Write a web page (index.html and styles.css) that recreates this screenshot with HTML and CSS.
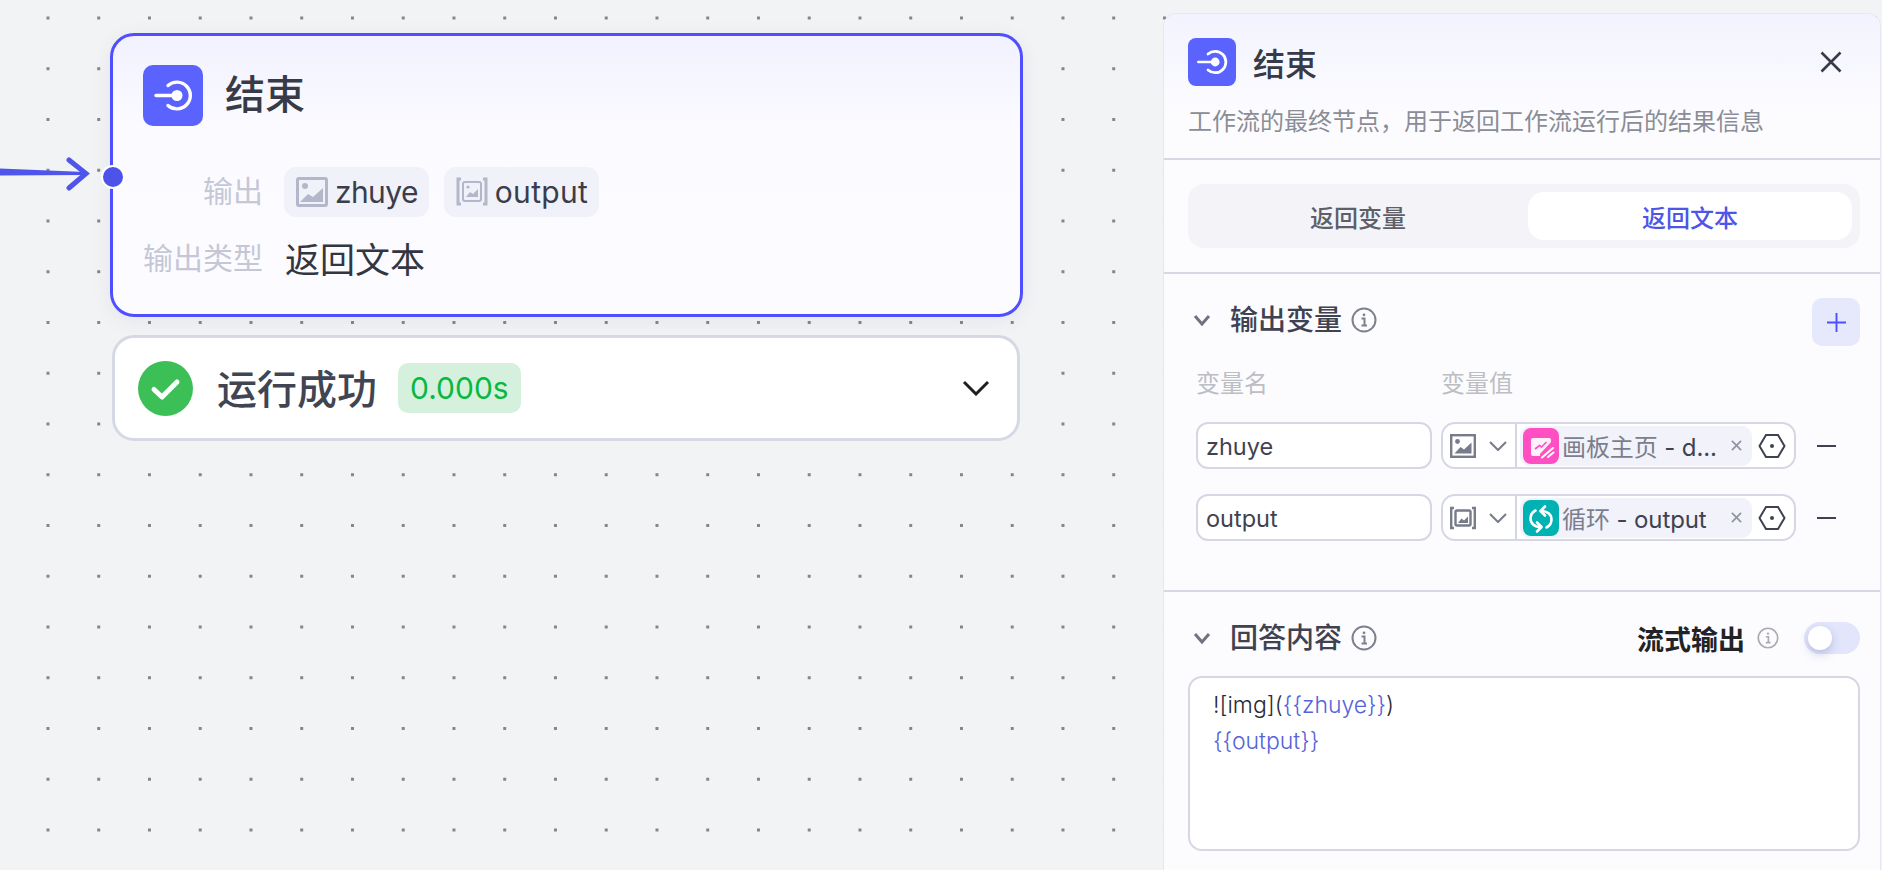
FILE: index.html
```html
<!DOCTYPE html>
<html lang="zh-CN">
<head>
<meta charset="utf-8">
<title>结束节点</title>
<link rel="stylesheet" href="styles.css">
</head>
<body>
<div class="app">
  <main class="canvas">
    <svg class="edge" width="100" height="50" viewBox="0 0 100 50">
      <path class="edge-fill" d="M0 11.5 L85 15 L85 18 L0 18.5 Z"/>
      <path class="edge-head" d="M69 3 L86 16.5 L69 31"/>
    </svg>
    <section class="node">
      <span class="handle"></span>
      <header class="node-head">
        <span class="end-icon end-icon-lg"><svg viewBox="0 0 60 60"><path d="M13 30H32"/><circle cx="34" cy="30" r="5.5"/><path d="M25 20A13.4 13.4 0 1 1 25 40"/></svg></span>
        <h1 class="node-title">结束</h1>
      </header>
      <div class="node-row node-row-out">
        <span class="node-label">输出</span>
        <span class="chip chip-image">
          <svg class="chip-icon" viewBox="0 0 32 30"><rect x="1.5" y="1.5" width="29" height="27" rx="1.5" class="ico-line"/><circle cx="9" cy="9" r="3" class="ico-fill"/><path d="M4 25 L12 17 L17 20 L27 11 V25 Z" class="ico-fill"/></svg>
          zhuye
        </span>
        <span class="chip chip-array">
          <svg class="chip-icon" viewBox="0 0 32 30"><path d="M5 2H2V27H5M27 2H30V27H27" class="ico-line"/><rect x="7" y="5" width="18" height="19" rx="2" class="ico-line ico-thin"/><circle cx="12" cy="10" r="1.6" class="ico-fill"/><path d="M10 20L14 15 17 17 22 12V20Z" class="ico-fill"/></svg>
          output
        </span>
      </div>
      <div class="node-row">
        <span class="node-label">输出类型</span>
        <span class="node-value">返回文本</span>
      </div>
    </section>
    <section class="result">
      <svg class="result-check" viewBox="0 0 55 55"><circle cx="27.5" cy="27.5" r="27.5"/><path d="M16 28.5 L24 36 L39 21"/></svg>
      <span class="result-text">运行成功</span>
      <span class="result-time">0.000s</span>
      <svg class="result-chevron" viewBox="0 0 28 16"><path d="M2 2 L14 14 L26 2"/></svg>
    </section>
  </main>

  <aside class="panel">
    <header class="panel-head">
      <div class="panel-title-row">
        <span class="end-icon"><svg viewBox="0 0 60 60"><path d="M13 30H32"/><circle cx="34" cy="30" r="5.5"/><path d="M25 20A13.4 13.4 0 1 1 25 40"/></svg></span>
        <h2 class="panel-title">结束</h2>
        <svg class="panel-close" viewBox="0 0 22 22"><path d="M1.5 1.5 L20.5 20.5 M20.5 1.5 L1.5 20.5"/></svg>
      </div>
      <p class="panel-desc">工作流的最终节点，用于返回工作流运行后的结果信息</p>
    </header>

    <div class="tabs-wrap">
      <div class="tabs">
        <span class="tab">返回变量</span>
        <span class="tab tab-active">返回文本</span>
      </div>
    </div>

    <section class="sec sec-vars">
      <div class="sec-head">
        <svg class="sec-chevron" viewBox="0 0 18 12"><path d="M2 2 L9 10 L16 2"/></svg>
        <span class="sec-title">输出变量</span>
        <svg class="info" viewBox="0 0 26 26"><circle cx="13" cy="13" r="11.5"/><path d="M10.5 11.5H13.5V18.5M10.5 18.5H16"/><circle class="info-dot" cx="13" cy="7.8" r="1.4"/></svg>
        <span class="add-btn"><svg viewBox="0 0 20 20"><path d="M10 0V20M0 10H20"/></svg></span>
      </div>
      <div class="var-grid var-labels">
        <span>变量名</span>
        <span>变量值</span>
      </div>
      <div class="var-grid var-row">
        <span class="var-name">zhuye</span>
        <div class="var-value">
          <span class="var-type">
            <svg class="type-icon" viewBox="0 0 26 24"><rect x="1.2" y="1.2" width="23.6" height="21.6" class="type-line"/><circle cx="7.5" cy="7.5" r="2.4" class="type-fill"/><path d="M4.5 19.5 L10.5 13 L14 15.5 L21.5 8.5 V19.5 Z" class="type-fill"/></svg>
            <svg class="type-chevron" viewBox="0 0 18 10"><path d="M1 1 L9 9 L17 1"/></svg>
          </span>
          <span class="ref">
            <span class="ref-icon ref-pink"><svg viewBox="0 0 36 36"><path class="pink-sheet" d="M8 12a2 2 0 0 1 2-2H26a2 2 0 0 1 2 2V14L17 26V28H10a2 2 0 0 1-2-2Z"/><path class="pink-line" d="M12 21L16.5 17.5 18.5 19 23.5 14"/><path class="pink-stroke" d="M19 29.5L30 20M25 29L30.5 24.5"/></svg></span>
            <span class="ref-text"><span class="ref-node">画板主页</span> - d...</span>
            <svg class="ref-x" viewBox="0 0 12 12"><path d="M1 1L11 11M11 1L1 11"/></svg>
          </span>
          <svg class="hex" viewBox="0 0 28 26"><path d="M8 2H20L26.5 13 20 24H8L1.5 13Z"/><circle cx="14" cy="13" r="2"/></svg>
        </div>
        <span class="minus"></span>
      </div>
      <div class="var-grid var-row">
        <span class="var-name">output</span>
        <div class="var-value">
          <span class="var-type">
            <svg class="type-icon" viewBox="0 0 26 24"><path d="M4 2H1.2V22H4M22 2H24.8V22H22" class="type-line"/><rect x="5.5" y="4.5" width="15" height="15" rx="1.5" class="type-line"/><path d="M8 17L11.5 12.5 14 14.5 18 10.5V17Z" class="type-fill"/></svg>
            <svg class="type-chevron" viewBox="0 0 18 10"><path d="M1 1 L9 9 L17 1"/></svg>
          </span>
          <span class="ref">
            <span class="ref-icon ref-teal"><svg viewBox="0 0 36 36"><path d="M18 11C25 11 28.5 15 28.5 19.5C28.5 23 26.5 26 23.5 27.5"/><path d="M22 6.5L17.5 11 22 15.5"/><path d="M18 27C11 27 7.5 23 7.5 18.5C7.5 15 9.5 12 12.5 10.5"/><path d="M14 22.5L18.5 27 14 31.5"/></svg></span>
            <span class="ref-text"><span class="ref-node">循环</span> - output</span>
            <svg class="ref-x" viewBox="0 0 12 12"><path d="M1 1L11 11M11 1L1 11"/></svg>
          </span>
          <svg class="hex" viewBox="0 0 28 26"><path d="M8 2H20L26.5 13 20 24H8L1.5 13Z"/><circle cx="14" cy="13" r="2"/></svg>
        </div>
        <span class="minus"></span>
      </div>
    </section>

    <section class="sec sec-answer">
      <div class="sec-head sec-head-answer">
        <svg class="sec-chevron" viewBox="0 0 18 12"><path d="M2 2 L9 10 L16 2"/></svg>
        <span class="sec-title">回答内容</span>
        <svg class="info" viewBox="0 0 26 26"><circle cx="13" cy="13" r="11.5"/><path d="M10.5 11.5H13.5V18.5M10.5 18.5H16"/><circle class="info-dot" cx="13" cy="7.8" r="1.4"/></svg>
        <span class="stream-label">流式输出</span>
        <svg class="info info-light" viewBox="0 0 26 26"><circle cx="13" cy="13" r="11.5"/><path d="M10.5 11.5H13.5V18.5M10.5 18.5H16"/><circle class="info-dot" cx="13" cy="7.8" r="1.4"/></svg>
        <span class="toggle"><span class="toggle-knob"></span></span>
      </div>
      <div class="editor">
        <div>![img](<span class="tpl">{{zhuye}}</span>)</div>
        <div class="tpl">{{output}}</div>
      </div>
    </section>
  </aside>
</div>
</body>
</html>
```

FILE: styles.css
```css
* { box-sizing: border-box; }
html, body { margin: 0; height: 100%; overflow: hidden; }
body {
  font-family: Inter, "Noto Sans CJK SC", sans-serif;
  color: #383b47;
}
h1, h2, p { margin: 0; font-weight: 400; }
svg { display: block; flex: none; fill: none; }

.app {
  display: flex;
  height: 870px;
  background-color: #f2f3f5;
  background-image: radial-gradient(circle, #858589 1.4px, transparent 1.9px);
  background-size: 50.76px 50.76px;
  background-position: 22.6px -7.4px;
}
.canvas { position: relative; flex: 1; min-width: 0; }

/* canvas items */
.edge { position: absolute; left: 0; top: 157px; }
.edge-fill { fill: #4f55ea; }
.edge-head { stroke: #4f55ea; stroke-width: 5; stroke-linecap: round; stroke-linejoin: miter; }

.node {
  position: absolute;
  left: 110px;
  top: 33px;
  width: 913px;
  height: 284px;
  padding: 28.5px 30px;
  border: 3px solid #4f4fff;
  border-radius: 24px;
  background: linear-gradient(180deg, #f2f2ff 0%, #fbfbff 36%, #fcfcff 100%);
  box-shadow: 0 4px 22px rgba(30, 35, 60, .06);
}
.handle {
  position: absolute;
  left: -12px;
  top: 129px;
  width: 24px;
  height: 24px;
  border-radius: 50%;
  background: #4d53e8;
  border: 2px solid #fff;
}
.node-head { display: flex; align-items: center; gap: 22px; }
.end-icon {
  display: block;
  flex: none;
  width: 48px;
  height: 48px;
  border-radius: 8px;
  background: #5b63ff;
}
.end-icon svg { width: 100%; height: 100%; }
.end-icon path { stroke: #fff; stroke-width: 3.4; stroke-linecap: round; }
.end-icon circle { fill: #fff; }
.end-icon-lg { width: 60px; height: 61px; border-radius: 10px; }
.node-title { font-size: 40px; line-height: 60px; font-weight: 500; color: #383b47; }
.node-row { display: flex; align-items: center; gap: 21px; margin-top: 15px; height: 50px; }
.node-row-out { margin-top: 41px; gap: 21px; }
.node-label {
  width: 120px;
  flex: none;
  margin-bottom: 2px;
  text-align: right;
  white-space: nowrap;
  font-size: 30px;
  color: #c5c7d6;
}
.node-row-out .node-label { margin-bottom: 6px; }
.chip {
  display: flex;
  align-items: center;
  gap: 7px;
  height: 50px;
  padding: 0 11px 0 12px;
  border-radius: 12px;
  background: #f0f1f9;
  font-size: 30px;
  color: #3a3d4c;
}
.chip-image { letter-spacing: -.6px; }
.chip-array { letter-spacing: .3px; margin-left: -6px; }
.chip-icon { width: 32px; height: 30px; }
.ico-line { stroke: #b4b7c9; stroke-width: 3; }
.ico-thin { stroke-width: 2; }
.ico-fill { fill: #b4b7c9; }
.node-value { font-size: 35px; color: #333640; margin: 2px 0 0 1px; }

.result {
  position: absolute;
  left: 112px;
  top: 335px;
  width: 908px;
  height: 106px;
  display: flex;
  align-items: center;
  padding: 0 23px;
  border: 3px solid #d6d8e5;
  border-radius: 22px;
  background: #fff;
}
.result-check { width: 55px; height: 55px; }
.result-check circle { fill: #3dbf57; }
.result-check path { stroke: #fff; stroke-width: 5; stroke-linecap: round; stroke-linejoin: round; }
.result-text { margin: 0 0 2px 24px; font-size: 40px; font-weight: 500; color: #414452; }
.result-time {
  display: flex;
  align-items: center;
  height: 50px;
  margin-left: 21px;
  padding: 0 12px;
  border-radius: 10px;
  background: #d5f1de;
  font-size: 30px;
  color: #09b83e;
}
.result-chevron { width: 28px; height: 16px; margin-left: auto; margin-right: 4px; }
.result-chevron path { stroke: #1f2024; stroke-width: 3; }

/* panel */
.panel {
  flex: none;
  width: 718px;
  margin: 13px 1px 0 0;
  border: 1px solid #e6e7f0;
  border-bottom: 0;
  border-radius: 14px 14px 0 0;
  background: #fcfcff;
  overflow: hidden;
}
.panel-head {
  height: 146px;
  padding: 24px 38px 0 24px;
  border-bottom: 2px solid #d5d7e5;
  background: linear-gradient(180deg, #f2f3fe 0%, #fcfcff 70%);
}
.panel-title-row { display: flex; align-items: center; gap: 17px; }
.panel-title { font-size: 32px; font-weight: 500; color: #383b47; }
.panel-close { width: 22px; height: 22px; margin-left: auto; }
.panel-close path { stroke: #383b47; stroke-width: 2.6; }
.panel-desc { margin-top: 18px; font-size: 24px; line-height: 36px; color: #8a8d97; }

.tabs-wrap { padding: 24px 20px 24px 24px; border-bottom: 2px solid #d5d7e5; }
.tabs {
  display: flex;
  gap: 8px;
  height: 64px;
  padding: 8px;
  border-radius: 16px;
  background: #f4f4f8;
}
.tab {
  flex: 1;
  display: flex;
  align-items: center;
  justify-content: center;
  border-radius: 16px;
  font-size: 24px;
  font-weight: 500;
  color: #5d5f69;
}
.tab-active { background: #fff; color: #4e55e8; }

.sec { padding: 24px 20px 0 24px; }
.sec-vars { height: 318px; border-bottom: 2px solid #d5d7e5; }
.sec-answer { padding-top: 30px; }
.sec-head { display: flex; align-items: flex-start; height: 48px; }
.sec-head-answer { align-items: center; height: 32px; }
.sec-chevron { width: 18px; height: 12px; margin: 16px 0 0 5px; }
.sec-head-answer .sec-chevron { margin-top: 0; }
.sec-chevron path { stroke: #6f7280; stroke-width: 3; }
.sec-title {
  margin-left: 19px;
  font-size: 28px;
  line-height: 44px;
  font-weight: 500;
  color: #3f4250;
}
.sec-head-answer .sec-title { line-height: 32px; }
.info { width: 26px; height: 26px; margin: 9px 0 0 9px; }
.sec-head-answer .info { margin-top: 0; }
.info circle { stroke: #7d808e; stroke-width: 2; }
.info path { stroke: #7d808e; stroke-width: 2; }
.info .info-dot { fill: #7d808e; stroke-width: 0; }
.info-light circle, .info-light path { stroke: #a9abb7; }
.info-light .info-dot { fill: #a9abb7; }
.info-light { width: 22px; height: 22px; }
.sec-head-answer .info-light { margin-left: 12px; }
.add-btn {
  display: flex;
  align-items: center;
  justify-content: center;
  width: 48px;
  height: 48px;
  margin-left: auto;
  border-radius: 10px;
  background: #e6e8fc;
}
.add-btn svg { width: 19px; height: 19px; }
.add-btn path { stroke: #4f4fff; stroke-width: 2; }

.var-grid {
  display: grid;
  grid-template-columns: 236px 355px 41px;
  column-gap: 9px;
  margin-left: 8px;
}
.var-labels { margin-top: 22px; font-size: 24px; line-height: 32px; color: #bdbec4; }
.var-labels span:last-child { grid-column: 2; }
.var-row { align-items: center; height: 47px; margin-top: 25px; }
.var-labels + .var-row { margin-top: 22px; }
.var-name {
  display: flex;
  align-items: center;
  height: 47px;
  padding: 1px 0 0 8px;
  border: 2px solid #d5d7e5;
  border-radius: 12px;
  background: #fff;
  font-size: 23.5px;
  color: #3f4250;
}
.var-value {
  display: flex;
  align-items: center;
  height: 47px;
  border: 2px solid #d5d7e5;
  border-radius: 14px;
  background: #fff;
}
.var-type {
  display: flex;
  align-items: center;
  flex: none;
  width: 74px;
  height: 100%;
  padding-left: 7px;
  border-right: 2px solid #d5d7e5;
}
.type-icon { width: 26px; height: 24px; }
.type-line { stroke: #787b89; stroke-width: 2.4; }
.type-fill { fill: #787b89; }
.type-chevron { width: 18px; height: 10px; margin-left: 13px; }
.type-chevron path { stroke: #787b89; stroke-width: 2; }
.ref {
  display: flex;
  align-items: center;
  width: 232px;
  height: 40px;
  margin-left: 3px;
  padding-left: 3px;
  border-radius: 10px;
  background: #f1f2fa;
}
.ref-icon { flex: none; width: 36px; height: 36px; border-radius: 8px; }
.ref-pink { background: #ff4fc3; }
.ref-teal { background: #00b2b2; }
.ref-icon svg { width: 36px; height: 36px; }
.pink-sheet { fill: #fff; fill-opacity: .92; }
.pink-line { stroke: #ff4fc3; stroke-width: 1.6; }
.pink-stroke { stroke: #fff; stroke-width: 2; stroke-linecap: round; }
.ref-teal path { stroke: #fff; stroke-width: 2.6; stroke-linecap: round; stroke-linejoin: round; }
.ref-text { margin-left: 3px; font-size: 24px; color: #3f4250; white-space: nowrap; letter-spacing: -.1px; }
.ref-node { color: #7b7e8c; }
.ref-x { width: 11px; height: 11px; margin-left: auto; margin-right: 10px; }
.ref-x path { stroke: #8f92a0; stroke-width: 1.8; }
.hex { width: 28px; height: 26px; margin-left: 6px; }
.hex path { stroke: #3f4250; stroke-width: 2; }
.hex circle { fill: #3f4250; }
.minus { width: 19px; height: 2px; margin-left: 12px; background: #3f4250; }

.stream-label {
  margin-left: auto;
  font-size: 27px;
  font-weight: 700;
  color: #222327;
}
.toggle {
  display: flex;
  align-items: center;
  width: 56px;
  height: 32px;
  margin-left: 25px;
  padding-left: 4px;
  border-radius: 16px;
  background: #e2e5fb;
}
.toggle-knob {
  width: 24px;
  height: 24px;
  border-radius: 50%;
  background: #fff;
  box-shadow: 0 4px 10px rgba(60, 70, 140, .25);
}
.editor {
  height: 175px;
  margin-top: 22px;
  padding: 9px 23px;
  border: 2px solid #d5d7e5;
  border-radius: 14px;
  background: #fff;
  font-size: 23px;
  line-height: 36px;
  font-weight: 300;
  color: #2a2c33;
}
.tpl { color: #5563d8; }
```
